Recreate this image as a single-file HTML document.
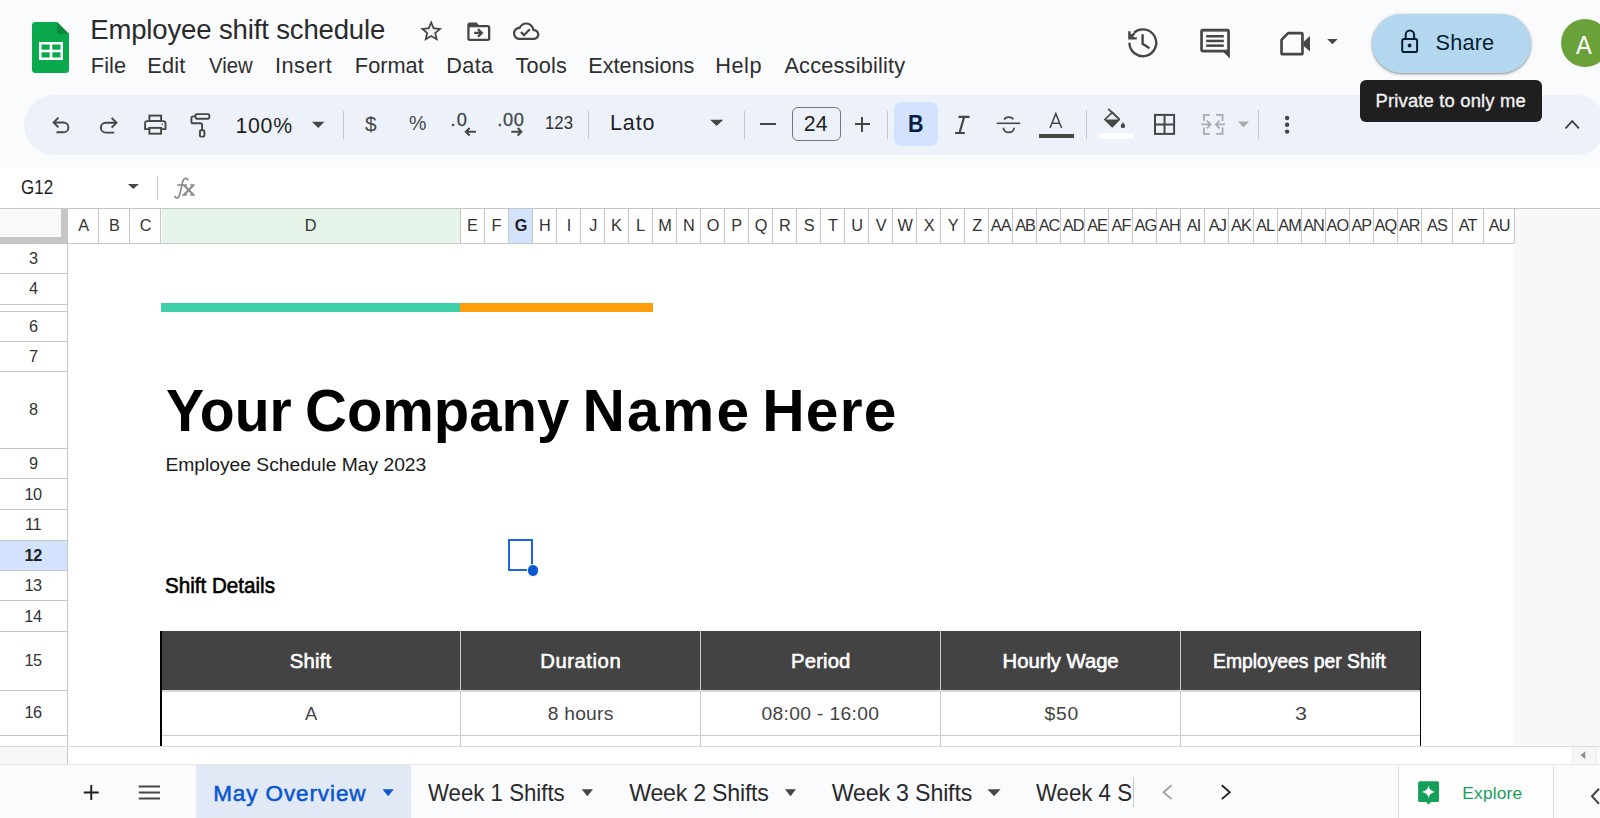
<!DOCTYPE html><html><head><meta charset="utf-8"><style>
*{margin:0;padding:0;box-sizing:border-box}
html,body{width:1600px;height:818px;overflow:hidden;background:#f9fbfd;font-family:"Liberation Sans",sans-serif;position:relative}
.t{position:absolute;white-space:nowrap;line-height:1.117;font-family:"Liberation Sans",sans-serif}
.a{position:absolute}
svg{position:absolute;overflow:visible}
</style></head><body>
<svg style="left:32px;top:22px" width="37" height="51" viewBox="0 0 37 51"><path d="M3.5 0H25L37 12V47.5Q37 51 33.5 51H3.5Q0 51 0 47.5V3.5Q0 0 3.5 0Z" fill="#0ba94e"/><path d="M25 0L37 12H25Z" fill="#0b8a3b"/><rect x="7" y="20" width="24" height="18" fill="#fff"/><rect x="9.5" y="22.5" width="8.2" height="5.2" fill="#0ba94e"/><rect x="20.3" y="22.5" width="8.2" height="5.2" fill="#0ba94e"/><rect x="9.5" y="30.3" width="8.2" height="5.2" fill="#0ba94e"/><rect x="20.3" y="30.3" width="8.2" height="5.2" fill="#0ba94e"/></svg><div class="t" style="left:90.20px;top:14.52px;font-size:27.54px;letter-spacing:-0.15px;color:#2a2a2a;font-weight:normal;">Employee shift schedule</div><div class="t" style="left:90.86px;top:53.93px;font-size:21.74px;letter-spacing:0.08px;color:#2e2e2e;font-weight:normal;">File</div><div class="t" style="left:147.26px;top:53.93px;font-size:21.74px;letter-spacing:0.19px;color:#2e2e2e;font-weight:normal;">Edit</div><div class="t" style="left:208.90px;top:53.93px;font-size:21.74px;letter-spacing:0.00px;color:#2e2e2e;font-weight:normal;transform:scaleX(0.9350);transform-origin:0 0;">View</div><div class="t" style="left:275.04px;top:53.93px;font-size:21.74px;letter-spacing:0.47px;color:#2e2e2e;font-weight:normal;">Insert</div><div class="t" style="left:354.86px;top:53.93px;font-size:21.74px;letter-spacing:0.01px;color:#2e2e2e;font-weight:normal;">Format</div><div class="t" style="left:446.26px;top:53.93px;font-size:21.74px;letter-spacing:0.33px;color:#2e2e2e;font-weight:normal;">Data</div><div class="t" style="left:515.46px;top:53.93px;font-size:21.74px;letter-spacing:0.16px;color:#2e2e2e;font-weight:normal;">Tools</div><div class="t" style="left:588.26px;top:53.93px;font-size:21.74px;letter-spacing:-0.02px;color:#2e2e2e;font-weight:normal;">Extensions</div><div class="t" style="left:715.26px;top:53.93px;font-size:21.74px;letter-spacing:0.51px;color:#2e2e2e;font-weight:normal;">Help</div><div class="t" style="left:784.39px;top:53.93px;font-size:21.74px;letter-spacing:0.20px;color:#2e2e2e;font-weight:normal;">Accessibility</div><svg style="left:417.8px;top:17.8px" width="26.4" height="26.4" viewBox="0 0 24 24"><path fill="#444746" d="M22 9.24l-7.19-.62L12 2 9.19 8.63 2 9.24l5.46 4.73L5.82 21 12 17.27 18.18 21l-1.63-7.03L22 9.24zM12 15.4l-3.76 2.27 1-4.28-3.32-2.88 4.38-.38L12 6.1l1.71 4.04 4.38.38-3.32 2.88 1 4.28L12 15.4z"/></svg><svg style="left:464.7px;top:17.7px" width="27.6" height="27.6" viewBox="0 0 24 24"><path fill="#444746" d="M20 6h-8l-2-2H4c-1.1 0-1.99.9-1.99 2L2 18c0 1.1.9 2 2 2h16c1.1 0 2-.9 2-2V8c0-1.1-.9-2-2-2zm0 12H4V8h16v10zm-7.84-6H8v2h4.16l-1.59 1.59L11.99 17 16 13.01 11.99 9l-1.41 1.41L12.16 12z"/></svg><svg style="left:513px;top:17.9px" width="26.4" height="26.4" viewBox="0 0 24 24"><path fill="#444746" d="M19.35 10.04C18.67 6.59 15.64 4 12 4 9.11 4 6.6 5.64 5.35 8.04 2.34 8.36 0 10.91 0 14c0 3.31 2.69 6 6 6h13c2.76 0 5-2.24 5-5 0-2.64-2.05-4.78-4.65-4.96zM19 18H6c-2.21 0-4-1.79-4-4 0-2.05 1.53-3.76 3.56-3.97l1.07-.11.5-.95C8.08 7.14 9.94 6 12 6c2.62 0 4.88 1.86 5.39 4.43l.3 1.5 1.53.11c1.56.1 2.78 1.41 2.78 2.96 0 1.65-1.35 3-3 3zm-9-3.82l-2.09-2.09L6.5 13.5 10 17l6.01-6.01-1.41-1.41z"/></svg><svg style="left:1120px;top:20px" width="50" height="45" viewBox="1120 20 50 45"><path d="M1129.4 42.8A13.4 13.4 0 1 0 1134.2 32.5" fill="none" stroke="#444746" stroke-width="2.4"/><path d="M1128.2 31.2V39.6H1136.8V37.2H1134.2L1130.6 33.6V31.2Z" fill="#444746"/><path d="M1129.6 38.2L1134.6 33.2" fill="none" stroke="#444746" stroke-width="2.6"/><path d="M1142.6 34.3V43.8L1149.5 48.2" fill="none" stroke="#444746" stroke-width="2.4"/></svg><svg style="left:1190px;top:20px" width="50" height="45" viewBox="1190 20 50 45"><path d="M1203 28.8H1227.2Q1229.9 28.8 1229.9 31.5V58.5L1223.8 52.4H1203Q1200.2 52.4 1200.2 49.6V31.6Q1200.2 28.8 1203 28.8Z" fill="#444746"/><rect x="1202.9" y="31.6" width="24.3" height="18.1" fill="#f9fbfd"/><rect x="1206.2" y="35" width="17.6" height="2.5" fill="#444746"/><rect x="1206.2" y="39.7" width="17.6" height="2.5" fill="#444746"/><rect x="1206.2" y="44.4" width="17.6" height="2.5" fill="#444746"/></svg><svg style="left:1270px;top:20px" width="80" height="45" viewBox="1270 20 80 45"><path d="M1281.55 39.9L1288.1 33.15H1301.2Q1302.45 33.15 1302.45 34.4V52.9Q1302.45 54.15 1301.2 54.15H1282.8Q1281.55 54.15 1281.55 52.9Z" fill="none" stroke="#444746" stroke-width="2.7" stroke-linejoin="round"/><path d="M1303.6 41.7L1310 36V51.4L1303.6 45.9Z" fill="#444746"/><path d="M1327.2 39H1337.7L1332.5 44.2Z" fill="#444746"/></svg><div class="a" style="left:1371.5px;top:13.5px;width:159.5px;height:59.5px;border-radius:30px;background:#b3d7ef;box-shadow:0 1px 2px rgba(0,0,0,0.3),0 1px 3px 1px rgba(0,0,0,0.12)"></div><svg style="left:1395px;top:25px" width="30" height="35" viewBox="1395 25 30 35"><path d="M1405.7 38.5V34.6A4.2 4.2 0 0 1 1414.1 34.6V38.5" fill="none" stroke="#0a1d30" stroke-width="2"/><rect x="1402.2" y="39.1" width="14.9" height="13" rx="1.8" fill="none" stroke="#0a1d30" stroke-width="2"/><circle cx="1409.6" cy="45.5" r="1.9" fill="#0a1d30"/></svg><div class="t" style="left:1435.62px;top:30.63px;font-size:21.74px;letter-spacing:0.13px;color:#0a1d30;font-weight:normal;">Share</div><div class="a" style="left:1561px;top:18.5px;width:48px;height:48px;border-radius:50%;background:#6aa13b"></div><div class="t" style="left:1576.38px;top:30.63px;font-size:25.07px;letter-spacing:0.00px;color:#ffffff;font-weight:normal;transform:scaleX(0.9438);transform-origin:0 0;">A</div><div class="a" style="left:24.00px;top:95.00px;width:1582.00px;height:60.00px;background:#edf2fa;border-radius:30px"></div><div class="a" style="left:1360.00px;top:80.30px;width:182.00px;height:42.00px;background:#1f1f1f;border-radius:6px"></div><div class="t" style="left:1375.53px;top:90.93px;font-size:18.41px;letter-spacing:0.17px;color:#f1f1f1;font-weight:normal;-webkit-text-stroke:0.35px #f1f1f1;">Private to only me</div><svg style="left:45px;top:105px" width="80" height="40" viewBox="45 105 80 40"><path d="M58.5 117.6L53.6 122.5L58.5 127.4" fill="none" stroke="#444746" stroke-width="1.9"/><path d="M54 122.5H63.5A4.9 4.9 0 0 1 63.5 132.3H56.5" fill="none" stroke="#444746" stroke-width="1.9"/><path d="M111.6 117.8L116.5 122.75L111.6 127.7" fill="none" stroke="#444746" stroke-width="1.9"/><path d="M116 122.75H105.75A4.92 4.92 0 0 0 105.75 132.6H114.3" fill="none" stroke="#444746" stroke-width="1.9"/></svg><svg style="left:135px;top:105px" width="80" height="40" viewBox="135 105 80 40"><rect x="149.4" y="115.6" width="11.7" height="5.4" fill="none" stroke="#444746" stroke-width="1.9"/><path d="M149.4 129.1H145.1V123.2Q145.1 121.1 147.2 121.1H163.4Q165.5 121.1 165.5 123.2V129.1H161.1" fill="none" stroke="#444746" stroke-width="1.9"/><rect x="149.4" y="127.9" width="11.7" height="5.8" fill="none" stroke="#444746" stroke-width="1.9"/><circle cx="162.3" cy="124.3" r="0.8" fill="#444746"/><rect x="195.5" y="114.1" width="13.8" height="4.6" rx="1.2" fill="none" stroke="#444746" stroke-width="1.9"/><path d="M195.5 116.4H193.2Q191.4 116.4 191.4 118.2V121.4Q191.4 123.3 193.2 123.3H200.2Q202.1 123.3 202.1 125.1V130.2" fill="none" stroke="#444746" stroke-width="1.9"/><rect x="199.9" y="130.3" width="4.5" height="6.3" rx="1.2" fill="none" stroke="#444746" stroke-width="1.9"/></svg><div class="t" style="left:235.40px;top:115.03px;font-size:21.30px;letter-spacing:0.74px;color:#1f1f1f;font-weight:normal;">100%</div><svg style="left:0;top:0" width="1" height="1" viewBox="0 0 1 1"><path d="M312 121.8H324.5L318.25 128Z" fill="#444746"/></svg><div class="a" style="left:343.00px;top:110.50px;width:1.10px;height:28.70px;background:#c7c7c7;"></div><div class="t" style="left:365.39px;top:111.78px;font-size:20.58px;letter-spacing:0.00px;color:#444746;font-weight:normal;transform:scaleX(1.0181);transform-origin:0 0;">$</div><div class="t" style="left:409.11px;top:111.84px;font-size:20.29px;letter-spacing:0.00px;color:#444746;font-weight:normal;transform:scaleX(0.9676);transform-origin:0 0;">%</div><div class="t" style="left:450.56px;top:110.17px;font-size:18.26px;letter-spacing:1.22px;color:#444746;font-weight:normal;-webkit-text-stroke:0.3px #444746;">.0</div><div class="t" style="left:497.16px;top:110.17px;font-size:18.26px;letter-spacing:0.69px;color:#444746;font-weight:normal;-webkit-text-stroke:0.3px #444746;">.00</div><svg style="left:440px;top:105px" width="100" height="40" viewBox="440 105 100 40"><path d="M475.9 131.7H465.8M469.6 128.1L465.9 131.75L469.6 135.4" fill="none" stroke="#444746" stroke-width="2.1"/><path d="M511.3 131.7H521.4M517.6 128.1L521.3 131.75L517.6 135.4" fill="none" stroke="#444746" stroke-width="2.1"/></svg><div class="t" style="left:544.64px;top:112.67px;font-size:18.70px;letter-spacing:0.00px;color:#303030;font-weight:normal;transform:scaleX(0.8961);transform-origin:0 0;">123</div><div class="a" style="left:588.10px;top:110.50px;width:1.10px;height:28.70px;background:#c7c7c7;"></div><div class="t" style="left:609.98px;top:112.40px;font-size:21.45px;letter-spacing:0.92px;color:#1f1f1f;font-weight:normal;">Lato</div><svg style="left:0;top:0" width="1" height="1" viewBox="0 0 1 1"><path d="M710 119.8H723.3L716.65 126Z" fill="#444746"/></svg><div class="a" style="left:743.90px;top:110.50px;width:1.10px;height:28.70px;background:#c7c7c7;"></div><div class="a" style="left:760.00px;top:123.20px;width:15.60px;height:1.90px;background:#444746;"></div><div class="a" style="left:791.50px;top:107.00px;width:49.00px;height:34.10px;background:transparent;border:1.3px solid #747775;border-radius:6px"></div><div class="t" style="left:803.63px;top:113.03px;font-size:21.30px;letter-spacing:0.26px;color:#1f1f1f;font-weight:normal;">24</div><div class="a" style="left:854.50px;top:123.30px;width:15.50px;height:1.90px;background:#444746;"></div><div class="a" style="left:861.30px;top:116.70px;width:1.90px;height:15.10px;background:#444746;"></div><div class="a" style="left:886.90px;top:110.50px;width:1.10px;height:28.70px;background:#c7c7c7;"></div><div class="a" style="left:894.40px;top:102.30px;width:43.40px;height:43.40px;background:#d3e3fd;border-radius:7px"></div><div class="t" style="left:907.60px;top:111.83px;font-size:23.19px;letter-spacing:0.00px;color:#041e49;font-weight:bold;transform:scaleX(0.9267);transform-origin:0 0;">B</div><svg style="left:950px;top:110px" width="25" height="30" viewBox="950 110 25 30"><path d="M958.5 116.8H969.6M955 133H964.8M964.2 116.8L959.5 133" fill="none" stroke="#444746" stroke-width="2.2"/></svg><svg style="left:990px;top:105px" width="40" height="40" viewBox="990 105 40 40"><path d="M996.8 123.3H1020.2" stroke="#444746" stroke-width="1.6"/><path d="M1004.2 119.6A4.9 3.6 0 0 1 1013.3 119.2" fill="none" stroke="#444746" stroke-width="1.7"/><path d="M1003.4 127.8A5 4.2 0 0 0 1014.1 127.8" fill="none" stroke="#444746" stroke-width="1.7"/></svg><svg style="left:1040px;top:105px" width="40" height="40" viewBox="1040 105 40 40"><path d="M1050 128L1055.8 113.6L1061.6 128M1052.1 123.2H1059.5" fill="none" stroke="#444746" stroke-width="1.5"/></svg><div class="a" style="left:1038.90px;top:133.60px;width:35.00px;height:4.70px;background:#444746;"></div><div class="a" style="left:1086.10px;top:110.20px;width:1.10px;height:29.00px;background:#c7c7c7;"></div><svg style="left:1095px;top:105px" width="45" height="40" viewBox="1095 105 45 40"><path d="M1108.3 108.8L1119.4 119.5" stroke="#444746" stroke-width="1.7"/><path d="M1104.8 119.5L1112.3 112.3L1119.4 119.5L1112.3 126.6Z" fill="none" stroke="#444746" stroke-width="1.7" stroke-linejoin="round"/><path d="M1104.8 119.5H1119.4L1112.3 126.6Z" fill="#444746"/><path d="M1122.9 122.3Q1125.1 125 1125.1 125.9A2.2 2.2 0 0 1 1120.7 125.9Q1120.7 125 1122.9 122.3Z" fill="#444746"/></svg><div class="a" style="left:1098.75px;top:133.10px;width:34.50px;height:5.50px;background:#ffffff;"></div><svg style="left:1150px;top:110px" width="30" height="30" viewBox="1150 110 30 30"><rect x="1155" y="114.9" width="19.1" height="19" fill="none" stroke="#444746" stroke-width="2"/><path d="M1164.55 114.9V133.9M1155 124.4H1174.1" stroke="#444746" stroke-width="2"/></svg><svg style="left:1195px;top:108px" width="45" height="32" viewBox="1195 108 45 32"><path d="M1203.9 120.9V114.8H1209.9M1203.9 127.4V133.9H1209.9M1222.6 120.9V114.8H1216.1M1222.6 127.4V133.9H1216.1" fill="none" stroke="#a9abae" stroke-width="1.8"/><path d="M1201.3 124.4H1209.5M1206.9 120.7L1210.6 124.4L1206.9 128.3M1224.9 124.4H1216.6M1219.6 120.7L1215.9 124.4L1219.6 128.3" fill="none" stroke="#a9abae" stroke-width="1.8"/></svg><svg style="left:0;top:0" width="1" height="1" viewBox="0 0 1 1"><path d="M1237.9 121.4H1249L1243.45 127.6Z" fill="#a9abae"/></svg><div class="a" style="left:1257.80px;top:110.20px;width:1.10px;height:29.20px;background:#c7c7c7;"></div><svg style="left:0;top:0" width="1" height="1" viewBox="0 0 1 1"><circle cx="1287.1" cy="118" r="2.2" fill="#444746"/></svg><svg style="left:0;top:0" width="1" height="1" viewBox="0 0 1 1"><circle cx="1287.1" cy="124.8" r="2.2" fill="#444746"/></svg><svg style="left:0;top:0" width="1" height="1" viewBox="0 0 1 1"><circle cx="1287.1" cy="131.6" r="2.2" fill="#444746"/></svg><svg style="left:1560px;top:115px" width="25" height="20" viewBox="1560 115 25 20"><path d="M1565.5 128.3L1572.2 121.2L1578.9 128.3" fill="none" stroke="#444746" stroke-width="1.9"/></svg><div class="a" style="left:0.00px;top:167.00px;width:1600.00px;height:41.00px;background:#ffffff;"></div><div class="t" style="left:20.90px;top:176.37px;font-size:20.14px;letter-spacing:0.00px;color:#1f1f1f;font-weight:normal;transform:scaleX(0.8440);transform-origin:0 0;">G12</div><svg style="left:0;top:0" width="1" height="1" viewBox="0 0 1 1"><path d="M127.9 184.1H138.8L133.35000000000002 189.1Z" fill="#444746"/></svg><div class="a" style="left:156.60px;top:176.20px;width:1.10px;height:23.60px;background:#c7c7c7;"></div><svg style="left:170px;top:175px" width="30" height="28" viewBox="170 175 30 28"><path d="M174.6 195.6Q175.2 198.2 177.3 197.9Q179.2 197.5 180.2 192.5L182.6 182Q183.5 178.3 185.9 178.3Q187.8 178.4 187.9 180.6" fill="none" stroke="#8a8a8a" stroke-width="1.6"/><path d="M177.2 185H183.8" stroke="#8a8a8a" stroke-width="1.5"/><path d="M184 185.2L193.4 194.8M193.4 185.2L184 194.8" stroke="#8a8a8a" stroke-width="2"/><path d="M182 185H187M190.2 185H194.8M182 195H187M190.2 195H194.8" stroke="#8a8a8a" stroke-width="1.4"/></svg><div class="a" style="left:0.00px;top:208.00px;width:1600.00px;height:538.00px;background:#ffffff;"></div><div class="a" style="left:1514.00px;top:209.00px;width:86.00px;height:537.00px;background:#f7f8f7;"></div><div class="a" style="left:0.00px;top:208.00px;width:1600.00px;height:1.00px;background:#c4c7c5;"></div><div class="a" style="left:0.00px;top:243.00px;width:1514.00px;height:1.00px;background:#c4c7c5;"></div><div class="a" style="left:0.00px;top:209.00px;width:61.30px;height:28.00px;background:#f8f9fa;"></div><div class="a" style="left:0.00px;top:237.00px;width:68.00px;height:7.00px;background:#c4c7c5;"></div><div class="a" style="left:61.30px;top:209.00px;width:6.70px;height:35.00px;background:#c4c7c5;"></div><div class="a" style="left:98.30px;top:209.00px;width:1.00px;height:34.00px;background:#c4c7c5;"></div><div class="t" style="left:78.13px;top:216.25px;font-size:16.30px;letter-spacing:0.00px;color:#333333;font-weight:normal;">A</div><div class="a" style="left:129.30px;top:209.00px;width:1.00px;height:34.00px;background:#c4c7c5;"></div><div class="t" style="left:108.98px;top:216.25px;font-size:16.30px;letter-spacing:0.00px;color:#333333;font-weight:normal;">B</div><div class="a" style="left:160.30px;top:209.00px;width:1.00px;height:34.00px;background:#c4c7c5;"></div><div class="t" style="left:139.69px;top:216.25px;font-size:16.30px;letter-spacing:0.00px;color:#333333;font-weight:normal;">C</div><div class="a" style="left:161.60px;top:209.00px;width:298.70px;height:34.00px;background:#e6f4ea;"></div><div class="a" style="left:460.00px;top:209.00px;width:1.00px;height:34.00px;background:#c4c7c5;"></div><div class="t" style="left:304.84px;top:216.25px;font-size:16.30px;letter-spacing:0.00px;color:#333333;font-weight:normal;">D</div><div class="a" style="left:484.01px;top:209.00px;width:1.00px;height:34.00px;background:#c4c7c5;"></div><div class="t" style="left:467.10px;top:216.25px;font-size:16.30px;letter-spacing:0.00px;color:#333333;font-weight:normal;">E</div><div class="a" style="left:508.03px;top:209.00px;width:1.00px;height:34.00px;background:#c4c7c5;"></div><div class="t" style="left:491.57px;top:216.25px;font-size:16.30px;letter-spacing:0.00px;color:#333333;font-weight:normal;">F</div><div class="a" style="left:509.33px;top:209.00px;width:23.01px;height:34.00px;background:#d3e3fd;"></div><div class="a" style="left:532.05px;top:209.00px;width:1.00px;height:34.00px;background:#c4c7c5;"></div><div class="t" style="left:514.73px;top:216.25px;font-size:16.30px;letter-spacing:0.00px;color:#1f1f1f;font-weight:bold;">G</div><div class="a" style="left:556.06px;top:209.00px;width:1.00px;height:34.00px;background:#c4c7c5;"></div><div class="t" style="left:539.03px;top:216.25px;font-size:16.30px;letter-spacing:0.00px;color:#333333;font-weight:normal;">H</div><div class="a" style="left:580.08px;top:209.00px;width:1.00px;height:34.00px;background:#c4c7c5;"></div><div class="t" style="left:566.67px;top:216.25px;font-size:16.30px;letter-spacing:0.00px;color:#333333;font-weight:normal;">I</div><div class="a" style="left:604.09px;top:209.00px;width:1.00px;height:34.00px;background:#c4c7c5;"></div><div class="t" style="left:589.34px;top:216.25px;font-size:16.30px;letter-spacing:0.00px;color:#333333;font-weight:normal;">J</div><div class="a" style="left:628.11px;top:209.00px;width:1.00px;height:34.00px;background:#c4c7c5;"></div><div class="t" style="left:610.95px;top:216.25px;font-size:16.30px;letter-spacing:0.00px;color:#333333;font-weight:normal;">K</div><div class="a" style="left:652.12px;top:209.00px;width:1.00px;height:34.00px;background:#c4c7c5;"></div><div class="t" style="left:636.02px;top:216.25px;font-size:16.30px;letter-spacing:0.00px;color:#333333;font-weight:normal;">L</div><div class="a" style="left:676.14px;top:209.00px;width:1.00px;height:34.00px;background:#c4c7c5;"></div><div class="t" style="left:658.20px;top:216.25px;font-size:16.30px;letter-spacing:0.00px;color:#333333;font-weight:normal;">M</div><div class="a" style="left:700.15px;top:209.00px;width:1.00px;height:34.00px;background:#c4c7c5;"></div><div class="t" style="left:683.12px;top:216.25px;font-size:16.30px;letter-spacing:0.00px;color:#333333;font-weight:normal;">N</div><div class="a" style="left:724.17px;top:209.00px;width:1.00px;height:34.00px;background:#c4c7c5;"></div><div class="t" style="left:706.68px;top:216.25px;font-size:16.30px;letter-spacing:0.00px;color:#333333;font-weight:normal;">O</div><div class="a" style="left:748.18px;top:209.00px;width:1.00px;height:34.00px;background:#c4c7c5;"></div><div class="t" style="left:731.35px;top:216.25px;font-size:16.30px;letter-spacing:0.00px;color:#333333;font-weight:normal;">P</div><div class="a" style="left:772.20px;top:209.00px;width:1.00px;height:34.00px;background:#c4c7c5;"></div><div class="t" style="left:754.71px;top:216.25px;font-size:16.30px;letter-spacing:0.00px;color:#333333;font-weight:normal;">Q</div><div class="a" style="left:796.21px;top:209.00px;width:1.00px;height:34.00px;background:#c4c7c5;"></div><div class="t" style="left:778.89px;top:216.25px;font-size:16.30px;letter-spacing:0.00px;color:#333333;font-weight:normal;">R</div><div class="a" style="left:820.23px;top:209.00px;width:1.00px;height:34.00px;background:#c4c7c5;"></div><div class="t" style="left:803.64px;top:216.25px;font-size:16.30px;letter-spacing:0.00px;color:#333333;font-weight:normal;">S</div><div class="a" style="left:844.24px;top:209.00px;width:1.00px;height:34.00px;background:#c4c7c5;"></div><div class="t" style="left:828.06px;top:216.25px;font-size:16.30px;letter-spacing:0.00px;color:#333333;font-weight:normal;">T</div><div class="a" style="left:868.26px;top:209.00px;width:1.00px;height:34.00px;background:#c4c7c5;"></div><div class="t" style="left:851.22px;top:216.25px;font-size:16.30px;letter-spacing:0.00px;color:#333333;font-weight:normal;">U</div><div class="a" style="left:892.27px;top:209.00px;width:1.00px;height:34.00px;background:#c4c7c5;"></div><div class="t" style="left:875.68px;top:216.25px;font-size:16.30px;letter-spacing:0.00px;color:#333333;font-weight:normal;">V</div><div class="a" style="left:916.29px;top:209.00px;width:1.00px;height:34.00px;background:#c4c7c5;"></div><div class="t" style="left:897.42px;top:216.25px;font-size:16.30px;letter-spacing:0.00px;color:#333333;font-weight:normal;">W</div><div class="a" style="left:940.30px;top:209.00px;width:1.00px;height:34.00px;background:#c4c7c5;"></div><div class="t" style="left:923.67px;top:216.25px;font-size:16.30px;letter-spacing:0.00px;color:#333333;font-weight:normal;">X</div><div class="a" style="left:964.32px;top:209.00px;width:1.00px;height:34.00px;background:#c4c7c5;"></div><div class="t" style="left:947.69px;top:216.25px;font-size:16.30px;letter-spacing:0.00px;color:#333333;font-weight:normal;">Y</div><div class="a" style="left:988.33px;top:209.00px;width:1.00px;height:34.00px;background:#c4c7c5;"></div><div class="t" style="left:972.19px;top:216.25px;font-size:16.30px;letter-spacing:0.00px;color:#333333;font-weight:normal;">Z</div><div class="a" style="left:1012.35px;top:209.00px;width:1.00px;height:34.00px;background:#c4c7c5;"></div><div class="t" style="left:990.75px;top:216.25px;font-size:16.30px;letter-spacing:-0.90px;color:#333333;font-weight:normal;">AA</div><div class="a" style="left:1036.36px;top:209.00px;width:1.00px;height:34.00px;background:#c4c7c5;"></div><div class="t" style="left:1015.17px;top:216.25px;font-size:16.30px;letter-spacing:-0.90px;color:#333333;font-weight:normal;">AB</div><div class="a" style="left:1060.38px;top:209.00px;width:1.00px;height:34.00px;background:#c4c7c5;"></div><div class="t" style="left:1038.66px;top:216.25px;font-size:16.30px;letter-spacing:-0.90px;color:#333333;font-weight:normal;">AC</div><div class="a" style="left:1084.39px;top:209.00px;width:1.00px;height:34.00px;background:#c4c7c5;"></div><div class="t" style="left:1062.71px;top:216.25px;font-size:16.30px;letter-spacing:-0.90px;color:#333333;font-weight:normal;">AD</div><div class="a" style="left:1108.41px;top:209.00px;width:1.00px;height:34.00px;background:#c4c7c5;"></div><div class="t" style="left:1087.13px;top:216.25px;font-size:16.30px;letter-spacing:-0.90px;color:#333333;font-weight:normal;">AE</div><div class="a" style="left:1132.42px;top:209.00px;width:1.00px;height:34.00px;background:#c4c7c5;"></div><div class="t" style="left:1111.60px;top:216.25px;font-size:16.30px;letter-spacing:-0.90px;color:#333333;font-weight:normal;">AF</div><div class="a" style="left:1156.44px;top:209.00px;width:1.00px;height:34.00px;background:#c4c7c5;"></div><div class="t" style="left:1134.51px;top:216.25px;font-size:16.30px;letter-spacing:-0.90px;color:#333333;font-weight:normal;">AG</div><div class="a" style="left:1180.45px;top:209.00px;width:1.00px;height:34.00px;background:#c4c7c5;"></div><div class="t" style="left:1159.06px;top:216.25px;font-size:16.30px;letter-spacing:-0.90px;color:#333333;font-weight:normal;">AH</div><div class="a" style="left:1204.47px;top:209.00px;width:1.00px;height:34.00px;background:#c4c7c5;"></div><div class="t" style="left:1186.78px;top:216.25px;font-size:16.30px;letter-spacing:-0.90px;color:#333333;font-weight:normal;">AI</div><div class="a" style="left:1228.48px;top:209.00px;width:1.00px;height:34.00px;background:#c4c7c5;"></div><div class="t" style="left:1208.84px;top:216.25px;font-size:16.30px;letter-spacing:-0.90px;color:#333333;font-weight:normal;">AJ</div><div class="a" style="left:1252.50px;top:209.00px;width:1.00px;height:34.00px;background:#c4c7c5;"></div><div class="t" style="left:1230.98px;top:216.25px;font-size:16.30px;letter-spacing:-0.90px;color:#333333;font-weight:normal;">AK</div><div class="a" style="left:1276.51px;top:209.00px;width:1.00px;height:34.00px;background:#c4c7c5;"></div><div class="t" style="left:1256.05px;top:216.25px;font-size:16.30px;letter-spacing:-0.90px;color:#333333;font-weight:normal;">AL</div><div class="a" style="left:1300.53px;top:209.00px;width:1.00px;height:34.00px;background:#c4c7c5;"></div><div class="t" style="left:1278.24px;top:216.25px;font-size:16.30px;letter-spacing:-0.90px;color:#333333;font-weight:normal;">AM</div><div class="a" style="left:1324.54px;top:209.00px;width:1.00px;height:34.00px;background:#c4c7c5;"></div><div class="t" style="left:1303.15px;top:216.25px;font-size:16.30px;letter-spacing:-0.90px;color:#333333;font-weight:normal;">AN</div><div class="a" style="left:1348.56px;top:209.00px;width:1.00px;height:34.00px;background:#c4c7c5;"></div><div class="t" style="left:1326.43px;top:216.25px;font-size:16.30px;letter-spacing:-0.90px;color:#333333;font-weight:normal;">AO</div><div class="a" style="left:1372.57px;top:209.00px;width:1.00px;height:34.00px;background:#c4c7c5;"></div><div class="t" style="left:1351.38px;top:216.25px;font-size:16.30px;letter-spacing:-0.90px;color:#333333;font-weight:normal;">AP</div><div class="a" style="left:1396.59px;top:209.00px;width:1.00px;height:34.00px;background:#c4c7c5;"></div><div class="t" style="left:1374.46px;top:216.25px;font-size:16.30px;letter-spacing:-0.90px;color:#333333;font-weight:normal;">AQ</div><div class="a" style="left:1420.60px;top:209.00px;width:1.00px;height:34.00px;background:#c4c7c5;"></div><div class="t" style="left:1398.92px;top:216.25px;font-size:16.30px;letter-spacing:-0.90px;color:#333333;font-weight:normal;">AR</div><div class="a" style="left:1451.70px;top:209.00px;width:1.00px;height:34.00px;background:#c4c7c5;"></div><div class="t" style="left:1426.93px;top:216.25px;font-size:16.30px;letter-spacing:-0.90px;color:#333333;font-weight:normal;">AS</div><div class="a" style="left:1482.70px;top:209.00px;width:1.00px;height:34.00px;background:#c4c7c5;"></div><div class="t" style="left:1458.79px;top:216.25px;font-size:16.30px;letter-spacing:-0.90px;color:#333333;font-weight:normal;">AT</div><div class="a" style="left:1513.70px;top:209.00px;width:1.00px;height:34.00px;background:#c4c7c5;"></div><div class="t" style="left:1488.77px;top:216.25px;font-size:16.30px;letter-spacing:-0.90px;color:#333333;font-weight:normal;">AU</div><div class="a" style="left:67.00px;top:244.00px;width:1.00px;height:518.00px;background:#c4c7c5;"></div><div class="a" style="left:0.00px;top:540.00px;width:67.00px;height:30.20px;background:#d3e3fd;"></div><div class="a" style="left:0.00px;top:273.00px;width:67.00px;height:1.20px;background:#c4c7c5;"></div><div class="t" style="left:29.06px;top:249.40px;font-size:16.30px;letter-spacing:-0.40px;color:#333333;font-weight:normal;">3</div><div class="a" style="left:0.00px;top:303.50px;width:67.00px;height:1.20px;background:#c4c7c5;"></div><div class="t" style="left:29.06px;top:279.40px;font-size:16.30px;letter-spacing:-0.40px;color:#333333;font-weight:normal;">4</div><div class="a" style="left:0.00px;top:310.50px;width:67.00px;height:1.20px;background:#c4c7c5;"></div><div class="a" style="left:0.00px;top:340.70px;width:67.00px;height:1.20px;background:#c4c7c5;"></div><div class="t" style="left:28.98px;top:316.75px;font-size:16.30px;letter-spacing:-0.40px;color:#333333;font-weight:normal;">6</div><div class="a" style="left:0.00px;top:370.90px;width:67.00px;height:1.20px;background:#c4c7c5;"></div><div class="t" style="left:29.02px;top:346.95px;font-size:16.30px;letter-spacing:-0.40px;color:#333333;font-weight:normal;">7</div><div class="a" style="left:0.00px;top:447.50px;width:67.00px;height:1.20px;background:#c4c7c5;"></div><div class="t" style="left:28.98px;top:400.35px;font-size:16.30px;letter-spacing:-0.40px;color:#333333;font-weight:normal;">8</div><div class="a" style="left:0.00px;top:478.30px;width:67.00px;height:1.20px;background:#c4c7c5;"></div><div class="t" style="left:29.02px;top:454.05px;font-size:16.30px;letter-spacing:-0.40px;color:#333333;font-weight:normal;">9</div><div class="a" style="left:0.00px;top:509.10px;width:67.00px;height:1.20px;background:#c4c7c5;"></div><div class="t" style="left:24.41px;top:484.85px;font-size:16.30px;letter-spacing:-0.40px;color:#333333;font-weight:normal;">10</div><div class="a" style="left:0.00px;top:539.50px;width:67.00px;height:1.20px;background:#c4c7c5;"></div><div class="t" style="left:25.10px;top:515.45px;font-size:16.30px;letter-spacing:-0.40px;color:#333333;font-weight:normal;">11</div><div class="a" style="left:0.00px;top:569.70px;width:67.00px;height:1.20px;background:#c4c7c5;"></div><div class="t" style="left:24.49px;top:545.75px;font-size:16.30px;letter-spacing:-0.40px;color:#1f1f1f;font-weight:bold;">12</div><div class="a" style="left:0.00px;top:600.30px;width:67.00px;height:1.20px;background:#c4c7c5;"></div><div class="t" style="left:24.45px;top:576.15px;font-size:16.30px;letter-spacing:-0.40px;color:#333333;font-weight:normal;">13</div><div class="a" style="left:0.00px;top:630.50px;width:67.00px;height:1.20px;background:#c4c7c5;"></div><div class="t" style="left:24.33px;top:606.55px;font-size:16.30px;letter-spacing:-0.40px;color:#333333;font-weight:normal;">14</div><div class="a" style="left:0.00px;top:689.90px;width:67.00px;height:1.20px;background:#c4c7c5;"></div><div class="t" style="left:24.41px;top:651.35px;font-size:16.30px;letter-spacing:-0.40px;color:#333333;font-weight:normal;">15</div><div class="a" style="left:0.00px;top:734.50px;width:67.00px;height:1.20px;background:#c4c7c5;"></div><div class="t" style="left:24.45px;top:703.35px;font-size:16.30px;letter-spacing:-0.40px;color:#333333;font-weight:normal;">16</div><div class="a" style="left:0.00px;top:746.00px;width:67.00px;height:18.00px;background:#f6f6f6;"></div><div class="a" style="left:160.60px;top:303.00px;width:299.70px;height:8.90px;background:#3ecfa9;"></div><div class="a" style="left:460.30px;top:303.00px;width:192.70px;height:8.90px;background:#ff9d0a;"></div><div class="t" style="left:165.86px;top:378.17px;font-size:58.70px;letter-spacing:0.00px;color:#000000;font-weight:bold;transform:scaleX(0.9726);transform-origin:0 0;">Your</div><div class="t" style="left:304.78px;top:378.17px;font-size:58.70px;letter-spacing:0.00px;color:#000000;font-weight:bold;transform:scaleX(0.9882);transform-origin:0 0;">Company</div><div class="t" style="left:582.48px;top:378.17px;font-size:58.70px;letter-spacing:2.24px;color:#000000;font-weight:bold;">Name</div><div class="t" style="left:762.18px;top:378.17px;font-size:58.70px;letter-spacing:1.26px;color:#000000;font-weight:bold;">Here</div><div class="t" style="left:165.46px;top:453.75px;font-size:19.28px;letter-spacing:-0.02px;color:#1a1a1a;font-weight:normal;">Employee Schedule May 2023</div><div class="t" style="left:165.32px;top:573.63px;font-size:21.74px;letter-spacing:0.00px;color:#000000;font-weight:normal;transform:scaleX(0.9485);transform-origin:0 0;-webkit-text-stroke:0.6px #000000;">Shift Details</div><div class="a" style="left:507.50px;top:538.75px;width:25.50px;height:31.75px;background:transparent;border:2px solid #1a66e0"></div><div class="a" style="left:526.6px;top:564.1px;width:12.8px;height:12.8px;border-radius:50%;background:#0b57d0;border:1.5px solid #fff"></div><div class="a" style="left:160.60px;top:630.50px;width:1260.30px;height:59.60px;background:#434343;"></div><div class="a" style="left:459.60px;top:630.50px;width:1.60px;height:115.50px;background:#c9c9c9;"></div><div class="a" style="left:699.50px;top:630.50px;width:1.60px;height:115.50px;background:#c9c9c9;"></div><div class="a" style="left:939.60px;top:630.50px;width:1.60px;height:115.50px;background:#c9c9c9;"></div><div class="a" style="left:1179.60px;top:630.50px;width:1.60px;height:115.50px;background:#c9c9c9;"></div><div class="a" style="left:160.60px;top:690.00px;width:1260.30px;height:1.60px;background:#d9d9d9;"></div><div class="a" style="left:160.60px;top:734.50px;width:1260.30px;height:1.50px;background:#cccccc;"></div><div class="a" style="left:159.90px;top:630.50px;width:2.10px;height:115.50px;background:#000000;"></div><div class="a" style="left:1419.80px;top:630.50px;width:1.50px;height:115.50px;background:#000000;"></div><div class="t" style="left:289.79px;top:650.44px;font-size:20.29px;letter-spacing:0.21px;color:#ffffff;font-weight:normal;-webkit-text-stroke:0.6px #ffffff;">Shift</div><div class="t" style="left:540.23px;top:650.44px;font-size:20.29px;letter-spacing:0.54px;color:#ffffff;font-weight:normal;-webkit-text-stroke:0.6px #ffffff;">Duration</div><div class="t" style="left:791.08px;top:650.44px;font-size:20.29px;letter-spacing:0.14px;color:#ffffff;font-weight:normal;-webkit-text-stroke:0.6px #ffffff;">Period</div><div class="t" style="left:1002.58px;top:650.44px;font-size:20.29px;letter-spacing:-0.04px;color:#ffffff;font-weight:normal;-webkit-text-stroke:0.6px #ffffff;">Hourly Wage</div><div class="t" style="left:1213.46px;top:650.44px;font-size:20.29px;letter-spacing:0.00px;color:#ffffff;font-weight:normal;transform:scaleX(0.9518);transform-origin:0 0;-webkit-text-stroke:0.6px #ffffff;">Employees per Shift</div><div class="t" style="left:304.91px;top:703.35px;font-size:19.28px;letter-spacing:0.00px;color:#434343;font-weight:normal;transform:scaleX(0.9505);transform-origin:0 0;">A</div><div class="t" style="left:547.63px;top:703.35px;font-size:19.28px;letter-spacing:0.24px;color:#434343;font-weight:normal;">8 hours</div><div class="t" style="left:761.53px;top:703.35px;font-size:19.28px;letter-spacing:0.33px;color:#434343;font-weight:normal;">08:00 - 16:00</div><div class="t" style="left:1044.51px;top:703.35px;font-size:19.28px;letter-spacing:0.83px;color:#434343;font-weight:normal;">$50</div><div class="t" style="left:1295.14px;top:703.35px;font-size:19.28px;letter-spacing:0.00px;color:#434343;font-weight:normal;transform:scaleX(1.1157);transform-origin:0 0;">3</div><div class="a" style="left:68.00px;top:746.50px;width:1504.00px;height:17.00px;background:#ffffff;"></div><div class="a" style="left:67.00px;top:746.00px;width:1.00px;height:17.50px;background:#c4c7c5;"></div><div class="a" style="left:0.00px;top:745.50px;width:1600.00px;height:1.20px;background:#dcdcdc;"></div><div class="a" style="left:1572.10px;top:747.00px;width:24.20px;height:16.50px;background:#f6f6f6;"></div><div class="a" style="left:1572.10px;top:747.00px;width:1.00px;height:16.50px;background:#ebebeb;"></div><div class="a" style="left:1596.30px;top:747.00px;width:1.00px;height:16.50px;background:#ebebeb;"></div><svg style="left:0;top:0" width="1" height="1" viewBox="0 0 1 1"><path d="M1580.5 755.2L1585.3 751.2V758.9Z" fill="#8e8e8e"/></svg><div class="a" style="left:0.00px;top:764.00px;width:1600.00px;height:54.00px;background:#f9fbfd;"></div><div class="a" style="left:0.00px;top:764.00px;width:1600.00px;height:1.20px;background:#e6e8eb;"></div><svg style="left:75px;top:775px" width="100" height="35" viewBox="75 775 100 35"><path d="M91.25 785V800M83.75 792.5H98.75" stroke="#1f1f1f" stroke-width="1.9"/><path d="M138.75 786.5H160M138.75 792.5H160M138.75 798.5H160" stroke="#444746" stroke-width="1.9"/></svg><div class="a" style="left:196.25px;top:765.00px;width:214.50px;height:53.00px;background:#e1e9f7;"></div><div class="t" style="left:213.20px;top:780.78px;font-size:22.46px;letter-spacing:0.92px;color:#0b57d0;font-weight:normal;-webkit-text-stroke:0.55px #0b57d0;">May Overview</div><svg style="left:0;top:0" width="1" height="1" viewBox="0 0 1 1"><path d="M382.5 789.25H393.75L388.125 796.25Z" fill="#0b57d0"/></svg><div class="t" style="left:427.89px;top:781.13px;font-size:23.19px;letter-spacing:0.00px;color:#2a2a2a;font-weight:normal;transform:scaleX(0.9586);transform-origin:0 0;">Week 1 Shifts</div><svg style="left:0;top:0" width="1" height="1" viewBox="0 0 1 1"><path d="M581.7 789.25H593L587.35 796.25Z" fill="#444746"/></svg><div class="t" style="left:629.18px;top:781.13px;font-size:23.19px;letter-spacing:-0.24px;color:#2a2a2a;font-weight:normal;">Week 2 Shifts</div><svg style="left:0;top:0" width="1" height="1" viewBox="0 0 1 1"><path d="M785 789.25H796L790.5 796.25Z" fill="#444746"/></svg><div class="t" style="left:831.68px;top:781.13px;font-size:23.19px;letter-spacing:-0.17px;color:#2a2a2a;font-weight:normal;">Week 3 Shifts</div><svg style="left:0;top:0" width="1" height="1" viewBox="0 0 1 1"><path d="M987.5 789.25H1000.6L994.05 796.25Z" fill="#444746"/></svg><div class="a" style="left:1000px;top:770px;width:133px;height:48px;overflow:hidden"><div class="t" style="left:35.69px;top:11.13px;font-size:23.19px;letter-spacing:0.00px;color:#2a2a2a;font-weight:normal;transform:scaleX(0.9586);transform-origin:0 0;">Week 4 Shifts</div></div><div class="a" style="left:1132.90px;top:777.20px;width:1.10px;height:29.60px;background:#c7c7c7;"></div><svg style="left:1155px;top:780px" width="80" height="25" viewBox="1155 780 80 25"><path d="M1171.6 785.3L1163.6 792.2L1171.6 799.1" fill="none" stroke="#a0a0a0" stroke-width="1.8"/><path d="M1221.8 785.3L1229.8 792.2L1221.8 799.1" fill="none" stroke="#1f1f1f" stroke-width="1.8"/></svg><div class="a" style="left:1398.40px;top:765.00px;width:155.00px;height:53.00px;background:#fdfdfd;"></div><div class="a" style="left:1397.80px;top:765.00px;width:1.20px;height:53.00px;background:#e0e0e0;"></div><div class="a" style="left:1553.30px;top:765.00px;width:1.20px;height:53.00px;background:#e0e0e0;"></div><svg style="left:1415px;top:778px" width="30" height="30" viewBox="1415 778 30 30"><path d="M1419.6 781.25H1437.5Q1439 781.25 1439 782.75V800.4Q1439 801.9 1437.5 801.9H1431L1428.5 804.4L1426 801.9H1419.6Q1418.1 801.9 1418.1 800.4V782.75Q1418.1 781.25 1419.6 781.25Z" fill="#15a059"/><path d="M1428.5 785.6Q1429.3 791.1 1435 791.9Q1429.3 792.7 1428.5 798.1Q1427.7 792.7 1421.9 791.9Q1427.7 791.1 1428.5 785.6Z" fill="#fff"/></svg><div class="t" style="left:1462.37px;top:783.98px;font-size:17.25px;letter-spacing:0.21px;color:#15a059;font-weight:normal;">Explore</div><svg style="left:1585px;top:785px" width="15" height="25" viewBox="1585 785 15 25"><path d="M1599 788.75L1592 796.25L1599 803.75" fill="none" stroke="#444746" stroke-width="2"/></svg>
</body></html>
